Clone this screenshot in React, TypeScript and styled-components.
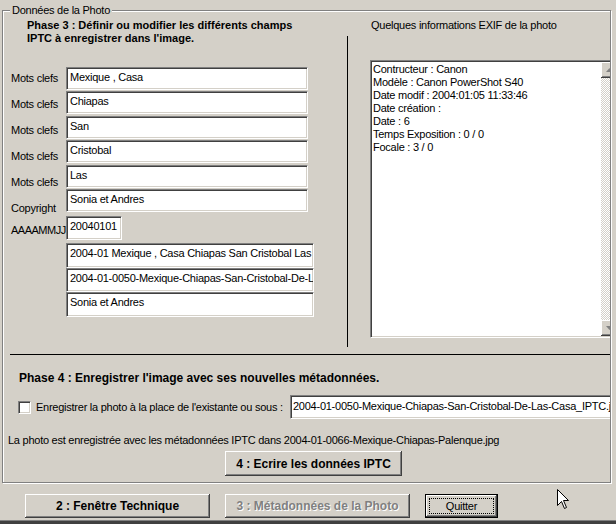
import React from 'react';
import styled, { createGlobalStyle, css } from 'styled-components';

const GlobalStyle = createGlobalStyle`
  html, body {
    margin: 0;
    padding: 0;
    background: #d4d0c8;
  }
  body {
    font-family: "Liberation Sans", Arial, sans-serif;
    font-size: 11px;
    letter-spacing: -0.25px;
    color: #000;
  }
`;

// Win32 "sunken" edge: outer grey/white, inner dark/light
const sunken = css`
  border: 1px solid;
  border-color: #808080 #ffffff #ffffff #808080;
  box-shadow: inset 1px 1px #404040, inset -1px -1px #d4d0c8;
`;

const raised = css`
  box-shadow:
    inset -1px -1px #404040,
    inset 1px 1px #ffffff,
    inset -2px -2px #808080,
    inset 2px 2px #d4d0c8;
`;

const Window = styled.div`
  position: relative;
  width: 616px;
  height: 524px;
  overflow: hidden;
  background: #d4d0c8;
  display: flex;
  flex-direction: column;
`;

const Frame = styled.div`
  position: relative;
  box-sizing: border-box;
  width: 609px;
  height: 473px;
  margin: 10px 0 0 2px;
  border: 1px solid #808080;
  box-shadow: inset 1px 1px #ffffff, 1px 1px #ffffff;
`;

const Legend = styled.span`
  position: absolute;
  left: 7px;
  top: -7px;
  padding: 0 2px;
  line-height: 13px;
  background: #d4d0c8;
`;

const FrameBody = styled.div`
  height: 100%;
  overflow: hidden;
  display: flex;
  flex-direction: column;
`;

const TopSection = styled.div`
  display: flex;
  height: 343px;
  flex: 0 0 auto;
`;

const LeftCol = styled.div`
  width: 344px;
  flex: 0 0 auto;
`;

const VLine = styled.div`
  width: 1px;
  height: 311px;
  margin-top: 25px;
  background: #000;
  flex: 0 0 auto;
`;

const RightCol = styled.div`
  flex: 1;
  padding-left: 23px;
  min-width: 0;
`;

const Heading = styled.div<{ $indent: number; $top: number; $size?: number }>`
  margin: ${(p) => p.$top}px 0 0 ${(p) => p.$indent}px;
  font-size: ${(p) => p.$size ?? 11}px;
  font-weight: bold;
  letter-spacing: 0;
  line-height: 13px;
  white-space: nowrap;
`;

const Caption = styled.div`
  margin-top: 8px;
  line-height: 13px;
  white-space: nowrap;
`;

const Form = styled.div`
  display: flex;
  margin-top: 20px;
`;

const Labels = styled.div`
  box-sizing: border-box;
  width: 63px;
  padding-left: 8px;
  display: flex;
  flex-direction: column;
`;

const Label = styled.div<{ $h?: number; $tight?: boolean }>`
  height: ${(p) => p.$h ?? 26}px;
  display: flex;
  align-items: center;
  white-space: nowrap;
  letter-spacing: ${(p) => (p.$tight ? '-0.5px' : '-0.25px')};
`;

const Fields = styled.div`
  padding-top: 2px;
  display: flex;
  flex-direction: column;
`;

const FieldStack = styled.div<{ $gap: number; $top?: number }>`
  display: flex;
  flex-direction: column;
  gap: ${(p) => p.$gap}px;
  margin-top: ${(p) => p.$top ?? 0}px;
`;

const Field = styled.div<{ $w: number; $h: number }>`
  box-sizing: border-box;
  width: ${(p) => p.$w}px;
  height: ${(p) => p.$h}px;
  padding: 3px 1px 0 3px;
  background: #fff;
  line-height: 13px;
  white-space: nowrap;
  overflow: hidden;
  ${sunken}
`;

const ExifBox = styled.div`
  display: flex;
  box-sizing: border-box;
  width: 249px;
  height: 278px;
  margin: 28px 0 0 -1px;
  padding: 1px;
  background: #fff;
  ${sunken}
`;

const ExifText = styled.div`
  flex: 1;
  padding: 1px 1px 0 1px;
  line-height: 13px;
  white-space: nowrap;
`;

const ScrollBar = styled.div`
  width: 16px;
  display: flex;
  flex-direction: column;
`;

const ScrollTrack = styled.div`
  flex: 1;
  background-color: #d4d0c8;
  background-image: repeating-conic-gradient(#ffffff 0 25%, #d4d0c8 0 50%);
  background-size: 2px 2px;
`;

const ScrollButton = styled.div`
  height: 16px;
  display: flex;
  align-items: center;
  justify-content: center;
  background: #d4d0c8;
  ${raised}
`;

const HLine = styled.div`
  height: 1px;
  margin-left: 7px;
  background: #000;
  flex: 0 0 auto;
`;

const SaveRow = styled.div`
  display: flex;
  align-items: center;
  height: 24px;
  margin-top: 10px;
`;

const CheckBox = styled.div`
  box-sizing: border-box;
  width: 13px;
  height: 13px;
  margin-left: 15px;
  background: #fff;
  flex: 0 0 auto;
  ${sunken}
`;

const CheckLabel = styled.div`
  width: 254px;
  margin-left: 5px;
  white-space: nowrap;
  flex: 0 0 auto;
`;

const SaveField = styled.div`
  box-sizing: border-box;
  width: 340px;
  height: 24px;
  padding: 4px 1px 0 2px;
  background: #fff;
  line-height: 13px;
  white-space: nowrap;
  flex: 0 0 auto;
  ${sunken}
`;

const Info = styled.div`
  margin: 15px 0 0 5px;
  line-height: 13px;
  white-space: nowrap;
`;

const Button = styled.div<{ $w: number; $bold?: boolean; $disabled?: boolean; $default?: boolean }>`
  position: relative;
  box-sizing: border-box;
  width: ${(p) => p.$w}px;
  height: 24px;
  display: flex;
  align-items: center;
  justify-content: center;
  flex: 0 0 auto;
  background: #d4d0c8;
  font-size: ${(p) => (p.$bold ? 12 : 11)}px;
  font-weight: ${(p) => (p.$bold ? 'bold' : 'normal')};
  letter-spacing: ${(p) => (p.$bold ? '0' : '-0.25px')};
  white-space: nowrap;
  ${raised}
  ${(p) =>
    p.$disabled &&
    css`
      color: #808080;
      text-shadow: 1px 1px 0 #ffffff;
    `}
  ${(p) =>
    p.$default &&
    css`
      border: 1px solid #000;
      &::after {
        content: '';
        position: absolute;
        inset: 3px;
        border: 1px dotted #000;
      }
    `}
`;

const WriteButton = styled(Button)`
  height: 25px;
  margin: 4px 0 0 222px;
`;

const Footer = styled.div`
  display: flex;
  gap: 15px;
  margin-top: 11px;
  padding-left: 25px;
`;

const BottomEdge = styled.div`
  margin-top: auto;
  height: 3px;
  background: #404040;
  border-top: 1px solid #808080;
`;

const Cursor = styled.svg`
  position: absolute;
  left: 557px;
  top: 489px;
`;

const keywords = ['Mexique , Casa', 'Chiapas', 'San', 'Cristobal', 'Las'];

const exif = [
  'Contructeur : Canon',
  'Modèle : Canon PowerShot S40',
  'Date modif : 2004:01:05 11:33:46',
  'Date création :',
  'Date : 6',
  'Temps Exposition : 0 / 0',
  'Focale : 3 / 0',
];

function Arrow({ up }: { up?: boolean }) {
  return (
    <svg width="7" height="4" viewBox="0 0 7 4">
      <polygon points={up ? '3.5,0 7,4 0,4' : '0,0 7,0 3.5,4'} fill="#808080" />
    </svg>
  );
}

export default function App() {
  return (
    <>
      <GlobalStyle />
      <Window>
        <Frame>
          <Legend>Données de la Photo</Legend>
          <FrameBody>
            <TopSection>
              <LeftCol>
                <Heading $indent={24} $top={8}>
                  Phase 3 : Définir ou modifier les différents champs
                  <br />
                  IPTC à enregistrer dans l'image.
                </Heading>
                <Form>
                  <Labels>
                    {keywords.map((k) => (
                      <Label key={k}>Mots clefs</Label>
                    ))}
                    <Label>Copyright</Label>
                    <Label $h={18} $tight>
                      AAAAMMJJ
                    </Label>
                  </Labels>
                  <Fields>
                    <FieldStack $gap={1.4}>
                      {keywords.map((k) => (
                        <Field key={k} $w={242} $h={23}>
                          {k}
                        </Field>
                      ))}
                      <Field $w={242} $h={23}>
                        Sonia et Andres
                      </Field>
                    </FieldStack>
                    <FieldStack $gap={0} $top={4}>
                      <Field $w={56} $h={24}>
                        20040101
                      </Field>
                    </FieldStack>
                    <FieldStack $gap={0} $top={3}>
                      <Field $w={248} $h={24.67}>
                        2004-01 Mexique , Casa Chiapas San Cristobal Las
                      </Field>
                      <Field $w={248} $h={24.67}>
                        2004-01-0050-Mexique-Chiapas-San-Cristobal-De-L
                      </Field>
                      <Field $w={248} $h={24.67}>
                        Sonia et Andres
                      </Field>
                    </FieldStack>
                  </Fields>
                </Form>
              </LeftCol>
              <VLine />
              <RightCol>
                <Caption>Quelques informations EXIF de la photo</Caption>
                <ExifBox>
                  <ExifText>
                    {exif.map((line) => (
                      <div key={line}>{line}</div>
                    ))}
                  </ExifText>
                  <ScrollBar>
                    <ScrollButton>
                      <Arrow up />
                    </ScrollButton>
                    <ScrollTrack />
                    <ScrollButton>
                      <Arrow />
                    </ScrollButton>
                  </ScrollBar>
                </ExifBox>
              </RightCol>
            </TopSection>
            <HLine />
            <Heading $indent={16} $top={17} $size={12}>
              Phase 4 : Enregistrer l'image avec ses nouvelles métadonnées.
            </Heading>
            <SaveRow>
              <CheckBox />
              <CheckLabel>Enregistrer la photo à la place de l'existante ou sous :</CheckLabel>
              <SaveField>2004-01-0050-Mexique-Chiapas-San-Cristobal-De-Las-Casa_IPTC.jpg</SaveField>
            </SaveRow>
            <Info>
              La photo est enregistrée avec les métadonnées IPTC dans 2004-01-0066-Mexique-Chiapas-Palenque.jpg
            </Info>
            <WriteButton $w={177} $bold>
              4 : Ecrire les données IPTC
            </WriteButton>
          </FrameBody>
        </Frame>
        <Footer>
          <Button $w={185} $bold>
            2 : Fenêtre Technique
          </Button>
          <Button $w={185} $bold $disabled>
            3 : Métadonnées de la Photo
          </Button>
          <Button $w={73} $default>
            Quitter
          </Button>
        </Footer>
        <BottomEdge />
        <Cursor width="12" height="20" viewBox="0 0 12 20">
          <path
            d="M0.5 0.5 V16.5 L4.5 12.5 L7.5 19.5 L9.5 18.5 L6.5 11.5 H11.5 Z"
            fill="#ffffff"
            stroke="#000000"
            strokeWidth="1"
          />
        </Cursor>
      </Window>
    </>
  );
}
